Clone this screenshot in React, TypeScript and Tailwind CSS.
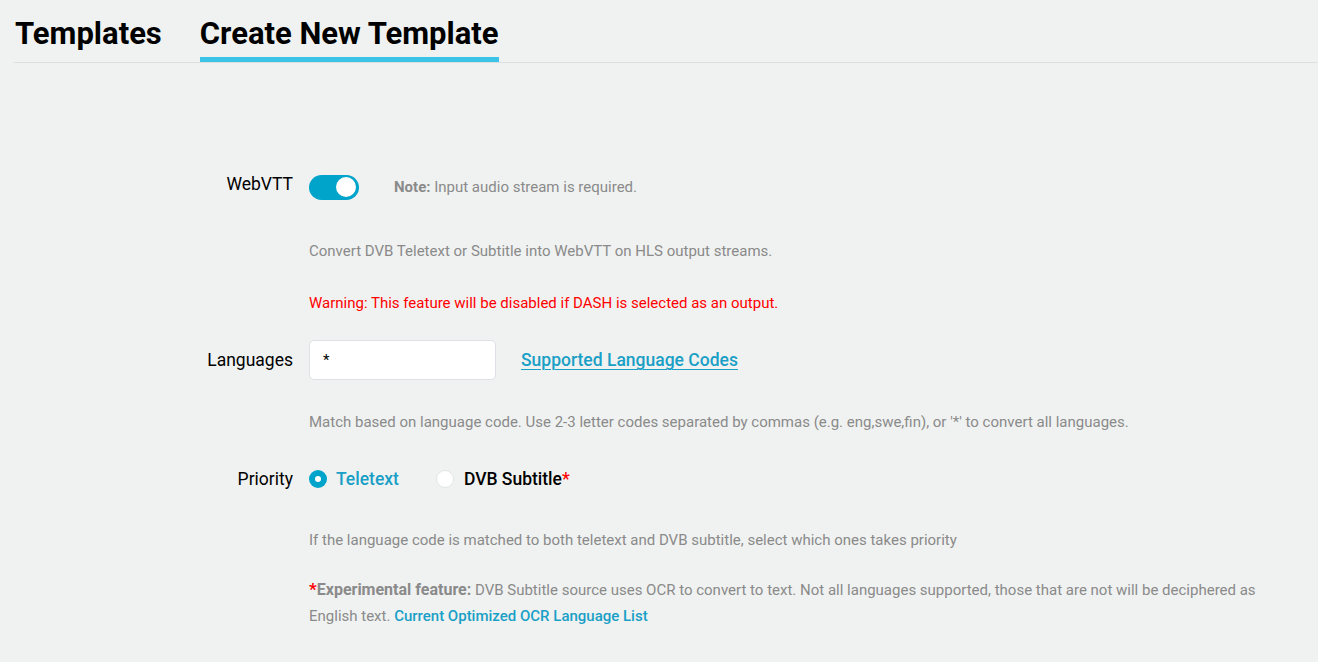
import React from "react";

const font = { fontFamily: "Roboto, 'Noto Sans', Arial, sans-serif" };

function Label({ children }: { children: React.ReactNode }) {
  return (
    <div className="w-[293px] shrink-0 text-right text-[17.5px] leading-[26px] text-black">
      {children}
    </div>
  );
}

function Row({
  label,
  children,
  className = "",
}: {
  label?: React.ReactNode;
  children: React.ReactNode;
  className?: string;
}) {
  return (
    <div className={`flex items-center gap-[16px] ${className}`}>
      <Label>{label}</Label>
      <div className="w-[960px] shrink-0">{children}</div>
    </div>
  );
}

export default function App() {
  return (
    <div className="min-h-screen bg-[#f0f2f1]" style={font}>
      <div className="ml-[14px] flex gap-[38px] border-b border-[#dcdfe2] pl-[1px]">
        <div className="pt-[16px] pb-[5px] border-b-[5px] border-transparent text-[31px] leading-[36px] font-bold text-black">
          Templates
        </div>
        <div className="pt-[16px] pb-[5px] border-b-[5px] border-[#3cc3e8] text-[31px] leading-[36px] font-bold text-black">
          Create New Template
        </div>
      </div>

      <Row label={<span className="relative top-[-3px]">WebVTT</span>} className="mt-[111px]">
        <div className="flex items-center">
          <div className="flex h-[25px] w-[50px] items-center justify-end rounded-full bg-[#00a3c9] pr-[3px]">
            <div className="h-[20px] w-[20px] rounded-full bg-white" />
          </div>
          <div className="ml-[35px] text-[15px] leading-[26px] text-[#8a8a8a]">
            <span className="font-bold">Note:</span> Input audio stream is required.
          </div>
        </div>
      </Row>

      <Row className="mt-[38px]">
        <div className="text-[15px] leading-[26px] text-[#8a8a8a]">
          Convert DVB Teletext or Subtitle into WebVTT on HLS output streams.
        </div>
      </Row>

      <Row className="mt-[26px]">
        <div className="text-[15px] leading-[26px] text-[#f00]">
          Warning: This feature will be disabled if DASH is selected as an output.
        </div>
      </Row>

      <Row label="Languages" className="mt-[24px]">
        <div className="flex items-center">
          <div className="flex h-[40px] w-[187px] items-center rounded-[5px] border border-[#dde1e6] bg-white pl-[13px] text-[15px] text-black">
            *
          </div>
          <a className="ml-[25px] text-[17.5px] font-medium leading-[26px] text-[#1a9fc6] underline underline-offset-[3px] decoration-[1px]">
            Supported Language Codes
          </a>
        </div>
      </Row>

      <Row className="mt-[29px]">
        <div className="text-[15px] leading-[26px] text-[#8a8a8a]">
          Match based on language code. Use 2-3 letter codes separated by commas (e.g. eng,swe,fin), or '*' to convert all languages.
        </div>
      </Row>

      <Row label="Priority" className="mt-[31px]">
        <div className="flex items-center">
          <div className="flex h-[18px] w-[18px] items-center justify-center rounded-full bg-[#00a3c9]">
            <div className="h-[6px] w-[6px] rounded-full bg-white" />
          </div>
          <span className="ml-[9px] text-[17.5px] font-medium leading-[26px] text-[#1a9fc6]">Teletext</span>
          <div className="ml-[37px] h-[18px] w-[18px] rounded-full border border-[#e2e5e8] bg-white" />
          <span className="ml-[10px] text-[17.5px] font-medium leading-[26px] text-black">
            DVB Subtitle<span className="text-[#f00]">*</span>
          </span>
        </div>
      </Row>

      <Row className="mt-[35px]">
        <div className="text-[15px] leading-[26px] text-[#8a8a8a]">
          If the language code is matched to both teletext and DVB subtitle, select which ones takes priority
        </div>
      </Row>

      <Row className="mt-[24px]">
        <div className="text-[15px] leading-[26px] text-[#8a8a8a]">
          <span className="text-[17px] leading-none font-bold text-[#f00]">*</span>
          <span className="text-[16px] leading-none font-bold">Experimental feature:</span> DVB Subtitle source uses OCR to convert to text. Not all languages supported, those that are not will be deciphered as English text.{" "}
          <a className="font-medium text-[#1a9fc6]">Current Optimized OCR Language List</a>
        </div>
      </Row>
    </div>
  );
}
